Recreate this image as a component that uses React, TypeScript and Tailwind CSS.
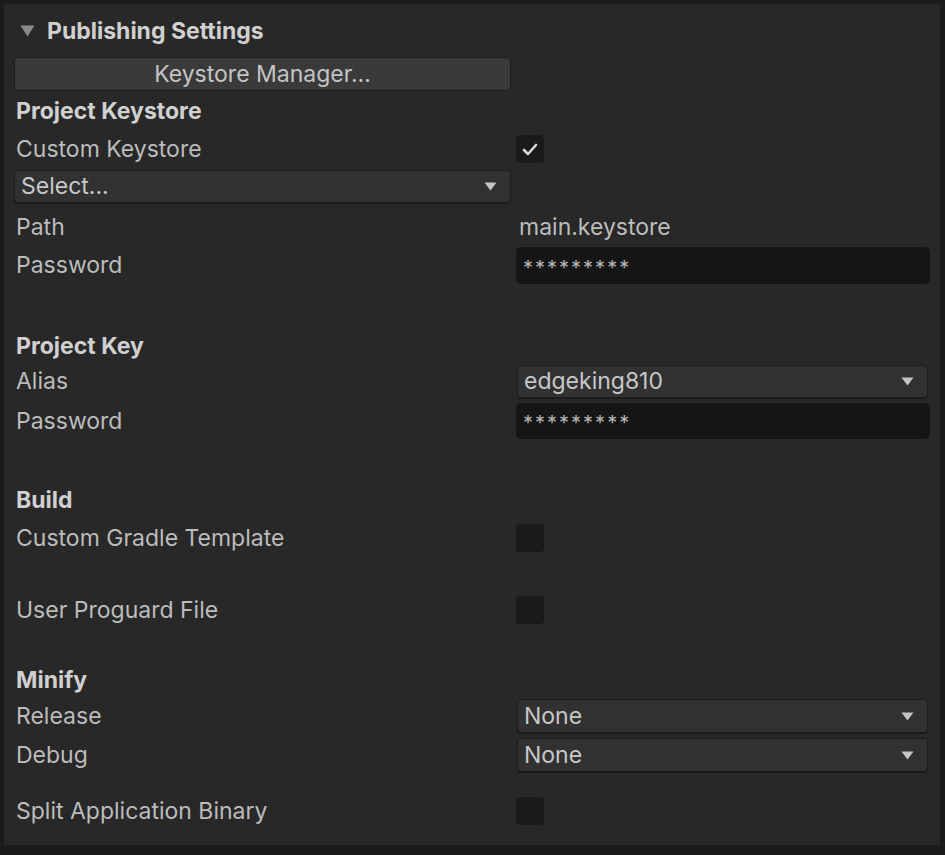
import React from 'react';

const font = { fontFamily: 'Inter, "Noto Sans", sans-serif' };

function Caret() {
  return (
    <svg width="13" height="9" viewBox="0 0 13 9" className="shrink-0">
      <path d="M0.5 0.5 L12.5 0.5 L6.5 8.5 Z" fill="#c4c4c4" />
    </svg>
  );
}

function Dropdown({ value, className }: { value: string; className: string }) {
  return (
    <div
      className={`flex items-center justify-between rounded-[4px] border border-[#1c1c1c] bg-[#313131] pl-[6px] pr-[13px] text-[23px] text-[#c8c8c8] shadow-[0_1px_0_#1a1a1a] ${className}`}
    >
      <span className="leading-none">{value}</span>
      <Caret />
    </div>
  );
}

function Checkbox({ checked }: { checked?: boolean }) {
  return (
    <div className="flex h-[28px] w-[28px] items-center justify-center rounded-[4px] bg-[#1a1a1a]">
      {checked && (
        <svg width="16" height="13" viewBox="0 0 16 13">
          <path d="M2 7 L6 11 L14 2" fill="none" stroke="#d8d8d8" strokeWidth="2.6" strokeLinecap="round" strokeLinejoin="round" />
        </svg>
      )}
    </div>
  );
}

function Heading({ text, className }: { text: string; className: string }) {
  return (
    <div className={`flex items-center pl-[2px] text-[23px] font-bold text-[#d0d0d0] ${className}`}>{text}</div>
  );
}

function Row({ label, className, children }: { label: string; className: string; children?: React.ReactNode }) {
  return (
    <div className={`flex items-center ${className}`}>
      <div className="w-[502px] shrink-0 pl-[2px] text-[23px] text-[#bcbcbc]">{label}</div>
      <div className="flex min-w-0 flex-1 items-center">{children}</div>
    </div>
  );
}

function Secret({ className }: { className: string }) {
  return (
    <div className={`flex w-[414px] items-center rounded-[5px] bg-[#151515] pl-[7px] pt-[4px] text-[20px] tracking-[2px] text-[#b4b4b4] ${className}`}>
      *********
    </div>
  );
}

export default function App() {
  return (
    <div className="h-[855px] w-[945px] bg-[#1b1b1b] pb-[10px] pl-[4px] pr-[5px] pt-[4px]" style={font}>
      <div className="flex h-full flex-col bg-[#282828] px-[10px]">
        {/* Header */}
        <div className="mt-[8px] flex h-[38px] items-center">
          <svg width="15" height="12" viewBox="0 0 15 12" className="ml-[6px] mr-[12px]">
            <path d="M0.5 0.5 L14.5 0.5 L7.5 11.5 Z" fill="#8a8a8a" />
          </svg>
          <span className="text-[23px] font-bold text-[#d0d0d0]">Publishing Settings</span>
        </div>

        {/* Keystore manager button */}
        <div className="mt-[7px] flex h-[34px] w-[497px] items-center justify-center rounded-[4px] border border-[#1c1c1c] bg-[#3a3a3a] text-[23px] text-[#c4c4c4]">
          Keystore Manager...
        </div>

        <Heading text="Project Keystore" className="mt-[3px] h-[34px]" />
        <Row label="Custom Keystore" className="mt-[5px] h-[32px]">
          <Checkbox checked />
        </Row>
        <Dropdown value="Select..." className="mt-[5px] h-[33px] w-[497px]" />
        <Row label="Path" className="mt-[8px] h-[32px]">
          <span className="pl-[3px] text-[23px] text-[#bcbcbc]">main.keystore</span>
        </Row>
        <Row label="Password" className="mt-[4px] h-[37px]">
          <Secret className="h-[37px]" />
        </Row>

        <Heading text="Project Key" className="mt-[45px] h-[34px]" />
        <Row label="Alias" className="mt-[2px] h-[33px]">
          <Dropdown value="edgeking810" className="ml-[1px] h-[33px] w-[411px]" />
        </Row>
        <Row label="Password" className="mt-[5px] h-[36px]">
          <Secret className="h-[36px]" />
        </Row>

        <Heading text="Build" className="mt-[44px] h-[34px]" />
        <Row label="Custom Gradle Template" className="mt-[5px] h-[32px]">
          <Checkbox />
        </Row>
        <Row label="User Proguard File" className="mt-[40px] h-[32px]">
          <Checkbox />
        </Row>

        <Heading text="Minify" className="mt-[37px] h-[34px]" />
        <Row label="Release" className="mt-[2px] h-[34px]">
          <Dropdown value="None" className="ml-[1px] h-[34px] w-[411px]" />
        </Row>
        <Row label="Debug" className="mt-[5px] h-[34px]">
          <Dropdown value="None" className="ml-[1px] h-[34px] w-[411px]" />
        </Row>
        <Row label="Split Application Binary" className="mt-[23px] h-[32px]">
          <Checkbox />
        </Row>
      </div>
    </div>
  );
}
